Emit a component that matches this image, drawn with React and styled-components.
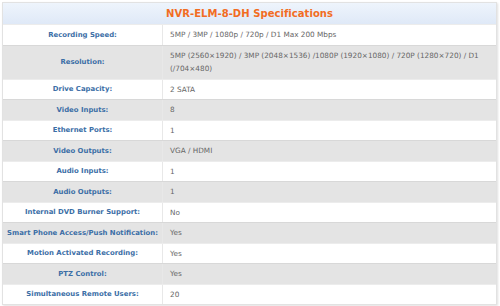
import styled, { createGlobalStyle } from "styled-components";

const GlobalStyle = createGlobalStyle`
  html, body {
    margin: 0;
    padding: 0;
    background: #fff;
  }
  body {
    font-family: "DejaVu Sans", Verdana, sans-serif;
  }
`;

const specs = [
  ["Recording Speed:", "5MP / 3MP / 1080p / 720p / D1 Max 200 Mbps"],
  [
    "Resolution:",
    "5MP (2560×1920) / 3MP (2048×1536) /1080P (1920×1080) / 720P (1280×720) / D1 (/704×480)",
  ],
  ["Drive Capacity:", "2 SATA"],
  ["Video Inputs:", "8"],
  ["Ethernet Ports:", "1"],
  ["Video Outputs:", "VGA / HDMI"],
  ["Audio Inputs:", "1"],
  ["Audio Outputs:", "1"],
  ["Internal DVD Burner Support:", "No"],
  ["Smart Phone Access/Push Notification:", "Yes"],
  ["Motion Activated Recording:", "Yes"],
  ["PTZ Control:", "Yes"],
  ["Simultaneous Remote Users:", "20"],
];

const App = () => {
  return (
    <Page>
      <GlobalStyle />
      <SpecTable>
        <Header>NVR-ELM-8-DH Specifications</Header>
        {specs.map(([label, value], i) => (
          <Row key={label} $shaded={i % 2 === 1} $tall={label === "Resolution:"}>
            <Label>{label}</Label>
            <Value>{value}</Value>
          </Row>
        ))}
      </SpecTable>
    </Page>
  );
};

const Page = styled.div`
  padding: 2px 3px 3px 2px;
  width: 500px;
  height: 306px;
  box-sizing: border-box;
`;

const SpecTable = styled.div`
  border: 1px solid #e2e2e2;
  box-shadow: 1px 1px 2px rgba(0, 0, 0, 0.12);
  display: flex;
  flex-direction: column;
`;

const Header = styled.div`
  height: 21px;
  display: flex;
  align-items: center;
  justify-content: center;
  background: linear-gradient(#eef4fc, #dfe9f7);
  color: #f26c22;
  font-weight: bold;
  font-size: 10px;
  letter-spacing: 0.05px;
`;

const Row = styled.div`
  display: grid;
  grid-template-columns: 160px 1fr;
  height: ${(p) => (p.$tall ? "34px" : "20.5px")};
  box-sizing: border-box;
  border-top: 1px solid ${(p) => (p.$shaded ? "#d8d8d8" : "#ececec")};
  background: ${(p) => (p.$shaded ? "#e4e4e4" : "#fff")};
`;

const Label = styled.div`
  display: flex;
  align-items: center;
  justify-content: center;
  color: #3b6ea6;
  font-weight: bold;
  font-size: 6.9px;
  border-right: 1px solid #e8e8e8;
  white-space: nowrap;
`;

const Value = styled.div`
  display: flex;
  align-items: center;
  padding: 0 8px 0 7px;
  color: #666;
  font-size: 7.3px;
  line-height: 13px;
`;

export default App;
